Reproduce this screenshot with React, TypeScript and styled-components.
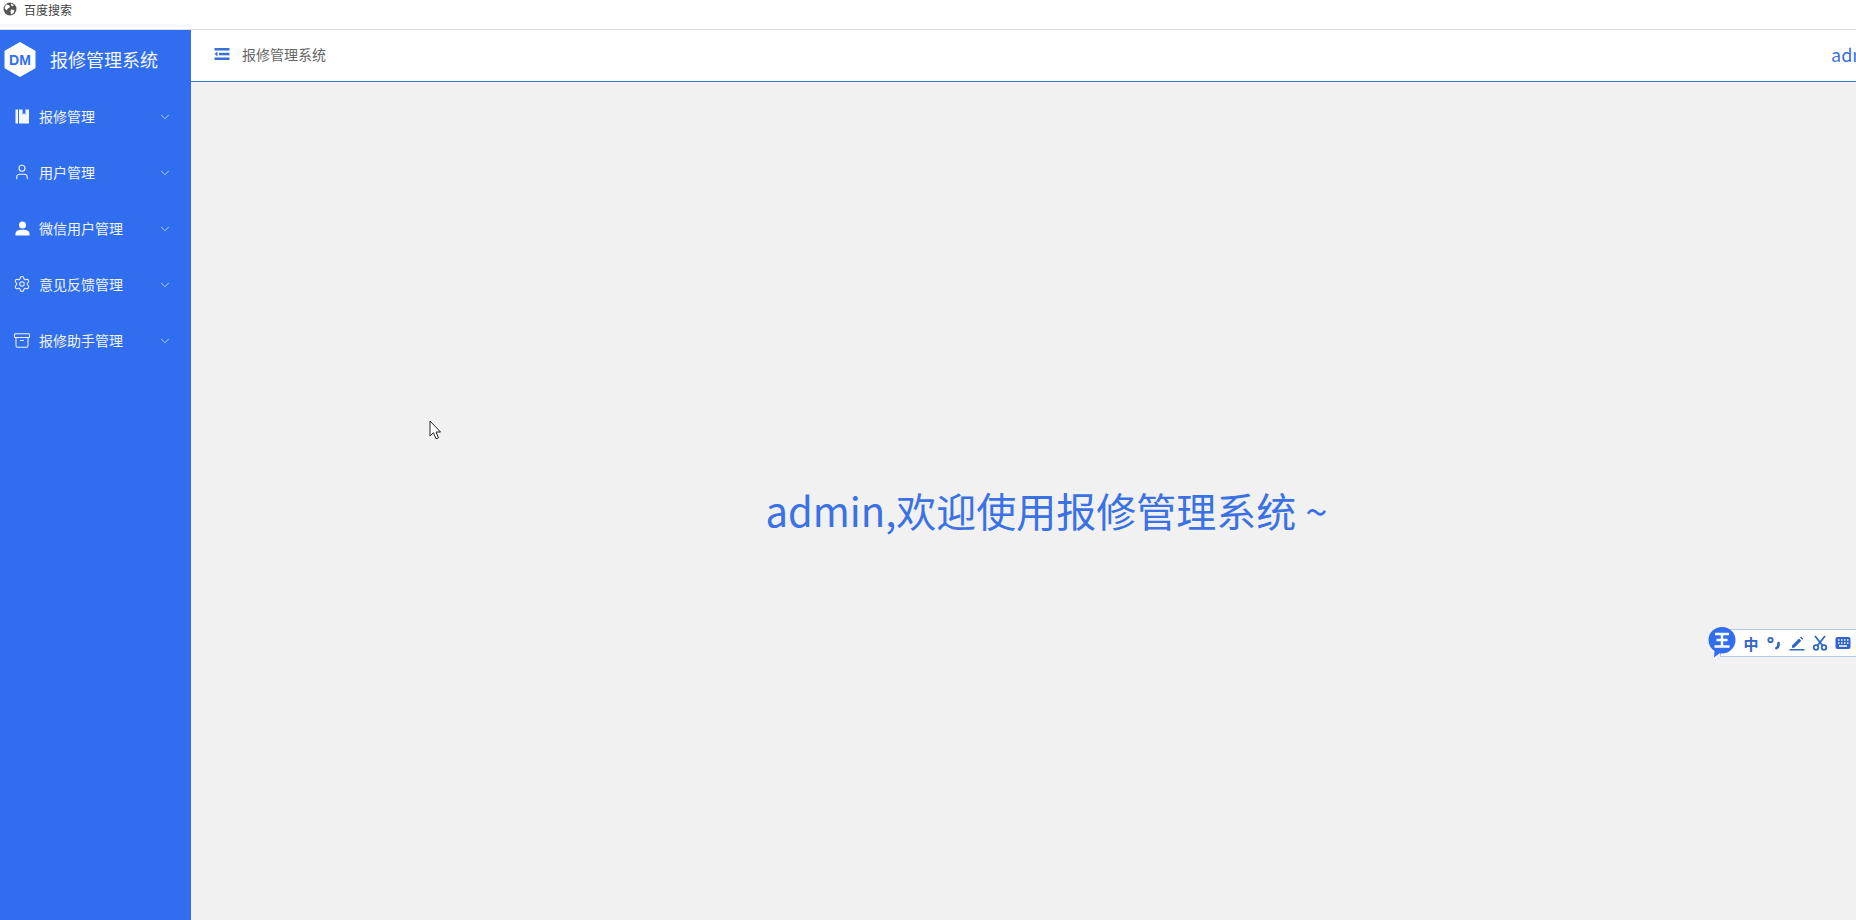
import { ChevronDown, User, Settings, Archive } from "lucide-react";
import styled, { createGlobalStyle } from "styled-components";

const GlobalStyle = createGlobalStyle`
    html, body {
        margin: 0;
        padding: 0;
        height: 100%;
        overflow: hidden;
        background: #f1f1f1;
        font-family: "Noto Sans CJK SC", "Noto Sans", sans-serif;
    }
`;

const Page = styled.div`
    position: relative;
    width: 1856px;
    height: 920px;
    overflow: hidden;
    display: flex;
    flex-direction: column;
`;

const TabBar = styled.div`
    height: 30px;
    flex: none;
    display: flex;
    align-items: flex-start;
    gap: 7px;
    padding: 2px 0 0 3px;
    box-sizing: border-box;
    background: #fff;
    border-bottom: 1px solid #dedede;
    font-size: 12px;
    line-height: 15px;
    color: #444;
`;

const Body = styled.div`
    flex: 1;
    display: flex;
    min-height: 0;
`;

const Sidebar = styled.aside`
    width: 191px;
    flex: none;
    background: #306eef;
    color: #fff;
`;

const Brand = styled.div`
    height: 58px;
    display: flex;
    align-items: center;
    gap: 14px;
    padding-left: 4px;
    font-size: 18px;
    color: #f4f7ff;
`;

const MenuList = styled.ul`
    list-style: none;
    margin: 0;
    padding: 0;
`;

const MenuItem = styled.li`
    height: 56px;
    display: flex;
    align-items: center;
    padding: 0 19px 0 13px;
    font-size: 14px;
    color: #f0f5ff;
`;

const MenuIcon = styled.span`
    width: 18px;
    height: 18px;
    margin-right: 8px;
    display: flex;
    align-items: center;
    justify-content: center;
    flex: none;
`;

const MenuLabel = styled.span`
    flex: 1;
`;

const MenuChevron = styled(ChevronDown)`
    margin-top: 1px;
`;

const Main = styled.main`
    flex: 1;
    display: flex;
    flex-direction: column;
    min-width: 0;
`;

const Header = styled.header`
    height: 52px;
    flex: none;
    box-sizing: border-box;
    display: flex;
    align-items: center;
    padding: 0 0 3px 23px;
    background: #fff;
    border-bottom: 1px solid #3f78c9;
    overflow: hidden;
`;

const HeaderTitle = styled.span`
    margin-left: 12px;
    font-size: 14px;
    color: #666;
`;

const HeaderUser = styled.span`
    margin-left: auto;
    margin-right: -31px;
    width: 56px;
    flex: none;
    font-size: 18px;
    color: #3a6fe0;
`;

const Content = styled.div`
    flex: 1;
    display: flex;
    align-items: flex-start;
    justify-content: center;
    padding: 400px 0 0 46px;
    background: #f1f1f1;
`;

const Welcome = styled.div`
    font-size: 40px;
    font-weight: 400;
    line-height: 56px;
    color: #3a72e6;
    white-space: nowrap;
`;

const Cursor = styled.svg`
    position: absolute;
    left: 429px;
    top: 420px;
`;

const ImeBar = styled.div`
    position: absolute;
    left: 1720px;
    top: 629px;
    width: 150px;
    height: 28px;
    box-sizing: border-box;
    display: flex;
    align-items: center;
    gap: 7px;
    padding-left: 22px;
    background: #fff;
    border: 1px solid #b4c8e8;
`;

const ImeLogo = styled.svg`
    position: absolute;
    left: 1707px;
    top: 626px;
`;

const ImeGlyph = styled.span`
    width: 16px;
    height: 16px;
    flex: none;
    display: flex;
    align-items: center;
    justify-content: center;
    font-size: 15px;
    font-weight: 700;
    color: #2f66c8;
`;

const GlobeIcon = () => (
    <svg width="14" height="14" viewBox="0 0 14 14">
        <circle cx="7" cy="7" r="6.5" fill="#555" />
        <path d="M3 2.5l3 .5 1 2-2 1.5-1.5 2L1.5 6zM8 7.5l3.5.5-1 3-2.5 1.5-.5-3zM8 1.500l3 1.500-1.500 1.200L8 3.500z" fill="#fff" />
    </svg>
);

const LogoHex = () => (
    <svg width="32" height="35" viewBox="0 0 32 35">
        <path d="M16 0.500l15 8.600v16.800l-15 8.600-15-8.600V9.100z" fill="#fff" stroke="#fff" strokeLinejoin="round" />
        <text x="16" y="22.500" textAnchor="middle" fontFamily="'Liberation Sans', sans-serif" fontWeight="700" fontSize="14" fill="#306eef">DM</text>
    </svg>
);

const BookIcon = () => (
    <svg width="15" height="15" viewBox="0 0 15 15" fill="#f4f7ff">
        <rect x="0.500" y="0.500" width="2.500" height="14" />
        <path d="M4 0.500h3.500v5l1.500-1.300 1.500 1.300v-5H14v14H4z" />
    </svg>
);

const SolidUserIcon = () => (
    <svg width="15" height="15" viewBox="0 0 15 15" fill="#fff">
        <circle cx="7.500" cy="4" r="3.500" />
        <path d="M0.500 14.500v-1.800C0.500 10 3 8.800 7.500 8.800s7 1.200 7 3.900v1.800z" />
    </svg>
);

const MenuIndent = () => (
    <svg width="16" height="12" viewBox="0 0 16 12" fill="#3a6fd8">
        <rect x="0.500" y="0" width="15" height="2.500" />
        <rect x="5" y="4.800" width="10.500" height="2.500" />
        <path d="M0.500 6l3-2.400v4.800z" />
        <rect x="0.500" y="9.500" width="15" height="2.500" />
    </svg>
);

const menu = [
    { label: "报修管理", icon: <BookIcon /> },
    { label: "用户管理", icon: <User size={18} strokeWidth={1.4} /> },
    { label: "微信用户管理", icon: <SolidUserIcon /> },
    { label: "意见反馈管理", icon: <Settings size={18} strokeWidth={1.4} /> },
    { label: "报修助手管理", icon: <Archive size={19} strokeWidth={1.4} /> },
];

export default function App() {
    return (
        <Page>
            <GlobalStyle />
            <TabBar>
                <GlobeIcon />
                百度搜索
            </TabBar>
            <Body>
                <Sidebar>
                    <Brand>
                        <LogoHex />
                        报修管理系统
                    </Brand>
                    <MenuList>
                        {menu.map((item) => (
                            <MenuItem key={item.label}>
                                <MenuIcon>{item.icon}</MenuIcon>
                                <MenuLabel>{item.label}</MenuLabel>
                                <MenuChevron size={14} strokeWidth={1.2} />
                            </MenuItem>
                        ))}
                    </MenuList>
                </Sidebar>
                <Main>
                    <Header>
                        <MenuIndent />
                        <HeaderTitle>报修管理系统</HeaderTitle>
                        <HeaderUser>admin</HeaderUser>
                    </Header>
                    <Content>
                        <Welcome>admin,欢迎使用报修管理系统 ~</Welcome>
                    </Content>
                </Main>
            </Body>

            <Cursor width="13" height="21" viewBox="0 0 13 21">
                <path d="M1 1v15l3.500-3.200 2.500 6 2.500-1-2.500-5.800h4.500z" fill="#fff" stroke="#222" strokeWidth="1" strokeLinejoin="miter" />
            </Cursor>

            <ImeBar>
                <ImeGlyph>中</ImeGlyph>
                <ImeGlyph>
                    <svg width="16" height="16" viewBox="0 0 16 16" fill="none" stroke="#2f66c8">
                        <circle cx="4.500" cy="5" r="2.200" strokeWidth="1.800" />
                        <path d="M12.500 8v2c0 1.500-.8 2.500-2.200 3.200" strokeWidth="2.600" strokeLinecap="round" />
                    </svg>
                </ImeGlyph>
                <ImeGlyph>
                    <svg width="16" height="16" viewBox="0 0 16 16" fill="#2f66c8">
                        <path d="M3 10.500l7-7 2.300 2.300-7 7H3zM11 2.500l1-1 2.300 2.300-1 1z" />
                        <rect x="0.500" y="14" width="15" height="1.500" />
                    </svg>
                </ImeGlyph>
                <ImeGlyph>
                    <svg width="16" height="16" viewBox="0 0 16 16" fill="none" stroke="#2f66c8" strokeWidth="1.800">
                        <circle cx="4" cy="12.500" r="2.300" />
                        <circle cx="12" cy="12.500" r="2.300" />
                        <path d="M5.500 10.500L13 1M10.500 10.500L3 1" />
                    </svg>
                </ImeGlyph>
                <ImeGlyph>
                    <svg width="16" height="14" viewBox="0 0 16 14">
                        <rect x="0.500" y="1" width="15" height="12" rx="2" fill="#2f66c8" />
                        <path d="M3 4h1.500M6 4h1.500M9 4h1.500M12 4h1.500M3 7h1.500M6 7h1.500M9 7h1.500M12 7h1.500M4 10h8" stroke="#fff" strokeWidth="1.300" />
                    </svg>
                </ImeGlyph>
            </ImeBar>
            <ImeLogo width="30" height="33" viewBox="0 0 30 33">
                <path d="M15 1C22.500 1 28.500 6.500 28.500 14S22.500 27.500 15 27.500c-.9 0-1.700 0-2.500-.2L7 31.500l.5-6.500C3.500 22.500 1.500 18.500 1.500 14 1.500 6.500 7.500 1 15 1z" fill="#306eef" />
                <path d="M8 8h14M9.500 14h11M7.500 20.500h15M15 8v12.500" stroke="#fff" strokeWidth="2.400" fill="none" />
            </ImeLogo>
        </Page>
    );
}
